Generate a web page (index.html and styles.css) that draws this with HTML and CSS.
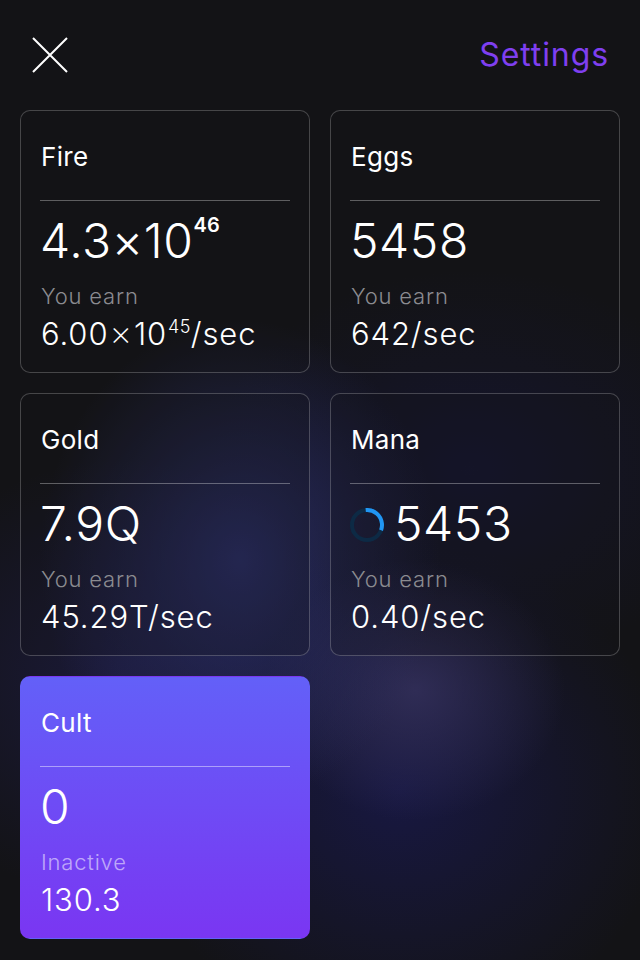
FILE: index.html
```html
<!DOCTYPE html>
<html lang="en">
<head>
    <meta charset="UTF-8">
    <meta name="viewport" content="width=device-width, initial-scale=1.0">
    <title>Resources</title>
    <link rel="stylesheet" href="styles.css">
</head>
<body>

    <div id="screen">
        <header class="topbar">
            <button class="close-btn" aria-label="Close">
                <svg width="36" height="36" viewBox="0 0 36 36">
                    <path d="M1 1 L35 35 M35 1 L1 35" stroke="#fff" stroke-width="2" fill="none"/>
                </svg>
            </button>
            <a class="settings-link" href="#">Settings</a>
        </header>

        <div class="grid">
            <div class="card">
                <div class="card-title">Fire</div>
                <div class="amount">4.3×10<span class="exp">46</span></div>
                <div class="label">You earn</div>
                <div class="rate">6.00<span class="times">×</span>10<span class="exp-small">45</span>/sec</div>
            </div>

            <div class="card">
                <div class="card-title">Eggs</div>
                <div class="amount">5458</div>
                <div class="label">You earn</div>
                <div class="rate">642/sec</div>
            </div>

            <div class="card">
                <div class="card-title">Gold</div>
                <div class="amount">7.9Q</div>
                <div class="label">You earn</div>
                <div class="rate">45.29T/sec</div>
            </div>

            <div class="card">
                <div class="card-title">Mana</div>
                <div class="amount with-spinner">
                    <svg class="spinner" width="34" height="34" viewBox="0 0 34 34">
                        <circle cx="17" cy="17" r="15" stroke="#0d2a45" stroke-width="4" fill="none"/>
                        <circle cx="17" cy="17" r="15" stroke="#2196f3" stroke-width="4" fill="none"
                                stroke-dasharray="30 94.25" transform="rotate(-95 17 17)"/>
                    </svg>
                    <span>5453</span>
                </div>
                <div class="label">You earn</div>
                <div class="rate">0.40/sec</div>
            </div>

            <div class="card active">
                <div class="card-title">Cult</div>
                <div class="amount">0</div>
                <div class="label">Inactive</div>
                <div class="rate">130.3</div>
            </div>
        </div>
    </div>

</body>
</html>
```

FILE: styles.css
```css
html, body {
    margin: 0;
    height: 100%;
}
body {
    font-family: Inter, "Noto Sans", sans-serif;
    color: #fff;
    background-color: #131316;
    background-image:
        radial-gradient(ellipse 200px 240px at 240px 560px, rgba(44, 48, 110, 0.85), rgba(44, 48, 110, 0) 100%),
        radial-gradient(ellipse 150px 130px at 415px 690px, rgba(56, 52, 98, 0.75), rgba(56, 52, 98, 0) 100%),
        radial-gradient(ellipse 270px 250px at 400px 790px, rgba(24, 24, 68, 0.95), rgba(24, 24, 68, 0) 100%),
        radial-gradient(ellipse 240px 220px at 120px 680px, rgba(32, 30, 80, 0.6), rgba(32, 30, 80, 0) 100%),
        radial-gradient(ellipse 260px 200px at 470px 470px, rgba(22, 22, 56, 0.7), rgba(22, 22, 56, 0) 100%);
}
#screen {
    padding: 20px;
}
.topbar {
    height: 70px;
    margin-bottom: 20px;
    padding: 0 12px;
    display: flex;
    align-items: center;
    justify-content: space-between;
}
.close-btn {
    background: none;
    border: none;
    padding: 0;
    width: 36px;
    height: 36px;
    display: block;
    cursor: pointer;
}
.close-btn svg {
    display: block;
}
.settings-link {
    color: #7f3ff0;
    text-decoration: none;
    font-size: 32px;
    line-height: 38px;
    letter-spacing: 0.9px;
    margin-right: -1px;
}
.grid {
    display: grid;
    grid-template-columns: 290px 290px;
    column-gap: 20px;
    row-gap: 20px;
}
.card {
    border: 1px solid rgba(255, 255, 255, 0.22);
    border-radius: 10px;
    background-color: rgba(18, 18, 22, 0.25);
    padding: 31px 19px 20px;
    height: 263px;
    box-sizing: border-box;
}
.card-title {
    font-size: 26px;
    line-height: 30px;
    letter-spacing: 0.3px;
    padding: 0 0 28px 1px;
    border-bottom: 1px solid rgba(255, 255, 255, 0.32);
}
.amount {
    margin-top: 12px;
    font-size: 48px;
    font-weight: 300;
    line-height: 56px;
    height: 56px;
    letter-spacing: 0.6px;
}
.exp {
    font-size: 20px;
    font-weight: 600;
    line-height: 0;
    letter-spacing: 0.3px;
    vertical-align: 26px;
}
.with-spinner {
    display: flex;
    align-items: center;
    gap: 10px;
}
.spinner {
    display: block;
    margin-top: 2px;
}
.label {
    margin-top: 13px;
    padding-left: 1px;
    font-size: 22px;
    font-weight: 300;
    line-height: 28px;
    letter-spacing: 0.8px;
    color: #8b8b90;
}
.rate {
    margin-top: 6px;
    padding-left: 1px;
    font-size: 31px;
    font-weight: 300;
    line-height: 36px;
    letter-spacing: 0.9px;
}
.times {
    font-size: 35px;
    font-weight: 200;
    line-height: 0;
    margin: 0 1px;
}
.exp-small {
    font-size: 18px;
    line-height: 0;
    letter-spacing: 0.3px;
    vertical-align: 12px;
    margin-left: 1px;
}
.card.active {
    border-color: transparent;
    background: linear-gradient(to bottom, #6360f8, #7a36f2);
}
.card.active .card-title {
    border-bottom-color: rgba(255, 255, 255, 0.45);
}
.card.active .label {
    color: rgba(255, 255, 255, 0.55);
}
```
